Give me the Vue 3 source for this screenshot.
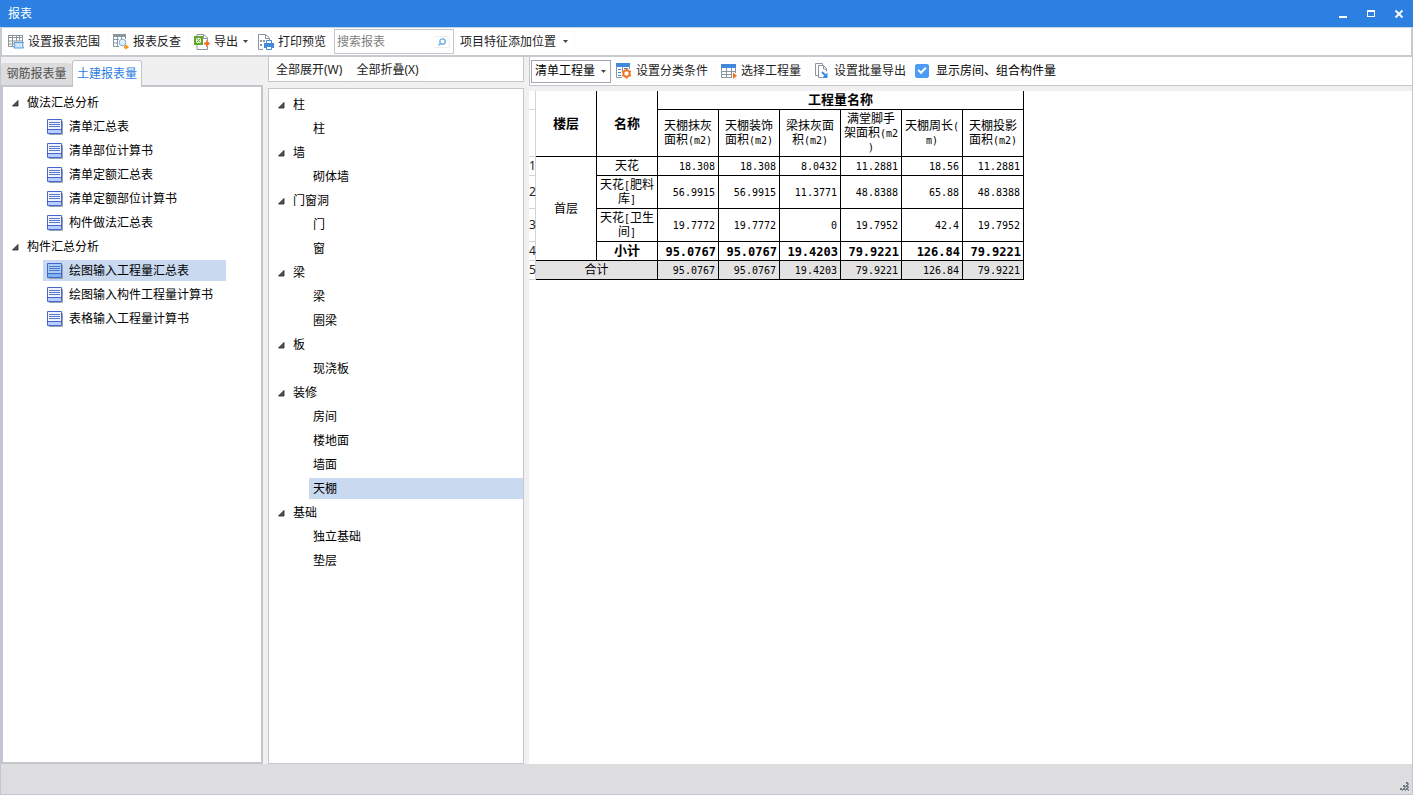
<script setup>
import { ref } from 'vue'

const keyword = ref('')
const scope = ref('清单工程量')
const showRooms = ref(true)
const selectedReport = ref('绘图输入工程量汇总表')
const selectedPart = ref('装修/天棚')

const reportTree = [
  { name: '做法汇总分析', children: ['清单汇总表', '清单部位计算书', '清单定额汇总表', '清单定额部位计算书', '构件做法汇总表'] },
  { name: '构件汇总分析', children: ['绘图输入工程量汇总表', '绘图输入构件工程量计算书', '表格输入工程量计算书'] }
]

const partTree = [
  { name: '柱', children: ['柱'] },
  { name: '墙', children: ['砌体墙'] },
  { name: '门窗洞', children: ['门', '窗'] },
  { name: '梁', children: ['梁', '圈梁'] },
  { name: '板', children: ['现浇板'] },
  { name: '装修', children: ['房间', '楼地面', '墙面', '天棚'] },
  { name: '基础', children: ['独立基础', '垫层'] }
]

// Each header is a list of lines; a line is [wide text, narrow text].
const headers = [
  [['天棚抹灰', ''], ['面积', '(m2)']],
  [['天棚装饰', ''], ['面积', '(m2)']],
  [['梁抹灰面', ''], ['积', '(m2)']],
  [['满堂脚手', ''], ['架面积', '(m2'], ['', ')']],
  [['天棚周长', '('], ['', 'm)']],
  [['天棚投影', ''], ['面积', '(m2)']]
]

const rows = [
  { name: [['天花', '']], values: ['18.308', '18.308', '8.0432', '11.2881', '18.56', '11.2881'] },
  { name: [['天花', '['], ['肥料', '']], tail: '库', values: ['56.9915', '56.9915', '11.3771', '48.8388', '65.88', '48.8388'] },
  { name: [['天花', '['], ['卫生', '']], tail: '间', values: ['19.7772', '19.7772', '0', '19.7952', '42.4', '19.7952'] }
]
const subtotal = ['95.0767', '95.0767', '19.4203', '79.9221', '126.84', '79.9221']
</script>

<template>
  <div class="window">
    <header class="titlebar">
      <h1>报表</h1>
      <div class="controls">
        <button type="button" aria-label="最小化"><svg width="10" height="10" viewBox="0 0 10 10"><path d="M1 7h8v2H1z" fill="#fff" /></svg></button>
        <button type="button" aria-label="最大化"><svg width="10" height="10" viewBox="0 0 10 10"><path d="M1 1h8v7H1zM2 3v4h6V3z" fill="#fff" fill-rule="evenodd" /></svg></button>
        <button type="button" aria-label="关闭"><svg width="10" height="10" viewBox="0 0 10 10"><path d="M1.500 1.500l7 7M8.500 1.500l-7 7" stroke="#fff" stroke-width="1.800" /></svg></button>
      </div>
    </header>

    <div class="toolbar">
      <button type="button" class="tool">
        <svg width="16" height="16" viewBox="0 0 16 16">
          <path d="M0 1h15v3H0z" fill="#8a969e" />
          <path d="M.5 3v9.500H6M.5 7h14M.5 10H6M4.500 4v8M8.500 4v3M11.500 4v3M14.500 3v5" fill="none" stroke="#8a969e" />
          <path d="M1 2h3v1H1zM5 2h3v1H5zM9 2h2v1H9zM12 2h2v1h-2z" fill="#fff" />
          <path d="M6 8.500h9.500l-1 2.500 1 3H6l1-3z" fill="#cfe5fa" stroke="#5b9de0" />
        </svg>
        <span>设置报表范围</span>
      </button>
      <button type="button" class="tool">
        <svg width="16" height="16" viewBox="0 0 16 16">
          <path d="M0 0h13v3H0z" fill="#8a969e" />
          <path d="M.5 0v12.500H6M.5 5.500H6M.5 9H5M4.500 3v9M8.500 3v2M12.500 2v3" fill="none" stroke="#8a969e" />
          <circle cx="9.500" cy="8.500" r="3.300" fill="#e2effc" stroke="#7fa8d8" />
          <path d="M13 10.500l3 2.500-3 2.500-2.500-2.500z" fill="#f39a1d" />
        </svg>
        <span>报表反查</span>
      </button>
      <button type="button" class="tool tight">
        <svg width="16" height="16" viewBox="0 0 16 16">
          <path d="M3 2V.5h7L13.500 4v3M13.500 12v3.500H3V11M9.500.5V4.500h4" fill="#fff" stroke="#8a969e" />
          <path d="M0 2h9v9H0z" fill="#65a52c" />
          <path d="M2 4h5v5H2z" fill="#e5f2d8" />
          <path d="M2.500 4.500l4 4M6.500 4.500l-4 4" stroke="#65a52c" />
          <path d="M10 8.500h2V6l4 3.500-4 3.500v-2.500h-2z" fill="#f26c21" />
        </svg>
        <span>导出</span>
        <svg class="caret" width="5" height="3" viewBox="0 0 5 3"><path d="M0 0h5L2.500 3z" fill="#444" /></svg>
      </button>
      <button type="button" class="tool">
        <svg width="16" height="16" viewBox="0 0 16 16">
          <path d="M5 15.500H.5V.5h7L11.500 4v2M7.500.5v4h4" fill="none" stroke="#8a969e" />
          <path d="M2 6h2v2H2zM5 6h2v2H5zM2 10h2v2H2z" fill="#8a969e" />
          <path d="M6 9h10v5H6z" fill="#4089dc" />
          <path d="M8.500 6.500h5v3h-5zM8.500 12.500h5v3h-5z" fill="#fff" stroke="#4089dc" />
        </svg>
        <span>打印预览</span>
      </button>
      <div class="search">
        <input v-model="keyword" type="text" placeholder="搜索报表" aria-label="搜索报表" />
        <button type="button" aria-label="搜索">
          <svg width="8" height="8" viewBox="0 0 8 8"><circle cx="4.500" cy="3.500" r="2.700" fill="none" stroke="#6aa9e4" stroke-width="1.300" /><path d="M2.600 5.400L.5 7.500" stroke="#6aa9e4" stroke-width="1.300" /></svg>
        </button>
      </div>
      <button type="button" class="tool wide">
        <span>项目特征添加位置</span>
        <svg class="caret" width="5" height="3" viewBox="0 0 5 3"><path d="M0 0h5L2.500 3z" fill="#444" /></svg>
      </button>
    </div>

    <main class="body">
      <section class="reports">
        <div class="tabs" role="tablist">
          <button type="button" role="tab" class="tab" aria-selected="false">钢筋报表量</button>
          <button type="button" role="tab" class="tab active" aria-selected="true">土建报表量</button>
        </div>
        <div class="report-panel">
          <ul class="tree report-tree">
            <li v-for="group in reportTree" :key="group.name">
              <div class="branch">
                <svg width="7" height="7" viewBox="0 0 7 7"><path d="M6 .5V6H.5z" fill="#555" stroke="#222" stroke-width=".8" /></svg>
                <span>{{ group.name }}</span>
              </div>
              <ul>
                <li v-for="item in group.children" :key="item" class="item">
                  <button type="button" class="leaf" :class="{ selected: item === selectedReport }" @click="selectedReport = item">
                    <svg width="16" height="16" viewBox="0 0 16 16">
                      <path d="M2 15.500h13.500V2" fill="none" stroke="#9aa3b5" />
                      <path class="sheet" d="M.5.5h14v14H.5z" stroke="#4468c8" />
                      <path class="foot" d="M1 11h13v3H1z" />
                      <path d="M1 10.500h13" stroke="#4468c8" />
                      <path d="M2 3.500h11M2 5.500h11M2 7.500h11" stroke="#5677cc" />
                    </svg>
                    <span>{{ item }}</span>
                  </button>
                </li>
              </ul>
            </li>
          </ul>
        </div>
      </section>

      <section class="parts">
        <div class="parts-bar">
          <button type="button" class="tool text">全部展开(W)</button>
          <button type="button" class="tool text">全部折叠(X)</button>
        </div>
        <div class="parts-panel">
          <ul class="tree">
            <li v-for="group in partTree" :key="group.name">
              <div class="branch">
                <svg width="7" height="7" viewBox="0 0 7 7"><path d="M6 .5V6H.5z" fill="#555" stroke="#222" stroke-width=".8" /></svg>
                <span>{{ group.name }}</span>
              </div>
              <ul>
                <li v-for="item in group.children" :key="item" class="item">
                  <button type="button" class="leaf" :class="{ selected: group.name + '/' + item === selectedPart }" @click="selectedPart = group.name + '/' + item">{{ item }}</button>
                </li>
              </ul>
            </li>
          </ul>
        </div>
      </section>

      <section class="view">
        <div class="view-bar">
          <div class="picker">
            <select v-model="scope" aria-label="工程量类型">
              <option>清单工程量</option>
              <option>定额工程量</option>
            </select>
            <svg width="5" height="3" viewBox="0 0 5 3"><path d="M0 0h5L2.500 3z" fill="#444" /></svg>
          </div>
          <button type="button" class="tool">
            <svg width="16" height="16" viewBox="0 0 16 16">
              <path d="M0 0h14v4H0z" fill="#4089dc" />
              <path d="M.5 3v11.500H6M13.500 3v3M6.500 4v4" fill="none" stroke="#8a969e" />
              <path d="M2 6.500h3M2 9.500h3M2 12.500h3M8 5.500h4" stroke="#4089dc" />
              <circle cx="10.500" cy="10.500" r="3.200" fill="#fff" stroke="#f07323" stroke-width="2" />
              <path d="M10.500 5.500v2M10.500 13.500v2M6.200 8l1.700 1M13.100 12l1.700 1M6.200 13l1.700-1M13.100 9l1.700-1" stroke="#f07323" stroke-width="2" />
            </svg>
            <span>设置分类条件</span>
          </button>
          <button type="button" class="tool">
            <svg width="16" height="16" viewBox="0 0 16 16">
              <path d="M0 1h15v4H0z" fill="#4089dc" />
              <path d="M.5 5v9.500H11M.5 8.500h14M.5 11.500H11M5.500 5v9M10.500 5v9M14.500 5v5" fill="none" stroke="#8a969e" />
              <path d="M12 9.500l4 3.250-4 3.250z" fill="#f07323" />
            </svg>
            <span>选择工程量</span>
          </button>
          <button type="button" class="tool">
            <svg width="16" height="16" viewBox="0 0 16 16">
              <path d="M4 12.500H1.500V.5h7v2M8 14.500H4.500v-12h5l3 3v3M9.500 2.500v3.500h3" fill="none" stroke="#8a969e" />
              <path d="M8 9l4 4" stroke="#4089dc" stroke-width="2" />
              <path d="M13.500 9.500v5.500H8z" fill="#4089dc" />
            </svg>
            <span>设置批量导出</span>
          </button>
          <label class="check">
            <input v-model="showRooms" type="checkbox" />
            <span>显示房间、组合构件量</span>
          </label>
        </div>

        <div class="sheet-area">
          <table>
            <thead>
              <tr class="r-title">
                <td class="no"></td>
                <th rowspan="2">楼层</th>
                <th rowspan="2">名称</th>
                <th colspan="6">工程量名称</th>
              </tr>
              <tr class="r-head">
                <td class="no"></td>
                <th v-for="(lines, i) in headers" :key="i" class="col">
                  <div v-for="(line, j) in lines" :key="j">{{ line[0] }}<span class="narrow">{{ line[1] }}</span></div>
                </th>
              </tr>
            </thead>
            <tbody>
              <tr v-for="(row, i) in rows" :key="i" :class="row.tail ? 'r-tall' : 'r-short'">
                <td class="no"><span>{{ i + 1 }}</span></td>
                <td v-if="i === 0" rowspan="4" class="name">首层</td>
                <td class="name">
                  <div><template v-for="(seg, j) in row.name" :key="j">{{ seg[0] }}<span class="narrow">{{ seg[1] }}</span></template></div>
                  <div v-if="row.tail">{{ row.tail }}<span class="narrow">]</span></div>
                </td>
                <td v-for="(v, j) in row.values" :key="j" class="num">{{ v }}</td>
              </tr>
              <tr class="r-short strong">
                <td class="no"><span>4</span></td>
                <td class="name">小计</td>
                <td v-for="(v, j) in subtotal" :key="j" class="num">{{ v }}</td>
              </tr>
            </tbody>
            <tfoot>
              <tr class="r-short total">
                <td class="no"><span>5</span></td>
                <td colspan="2" class="name">合计</td>
                <td v-for="(v, j) in subtotal" :key="j" class="num">{{ v }}</td>
              </tr>
            </tfoot>
          </table>
        </div>
      </section>
    </main>

    <footer class="status">
      <svg width="9" height="9" viewBox="0 0 9 9"><path d="M6 0h2v2H6zM3 3h2v2H3zM6 3h2v2H6zM0 6h2v2H0zM3 6h2v2H3zM6 6h2v2H6z" fill="#6f7780" /><path d="M8 1h1v2H8zM5 4h1v2H5zM8 4h1v2H8zM2 7h1v2H2zM5 7h1v2H5zM8 7h1v2H8zM7 2h1v1H7zM4 5h1v1H4zM7 5h1v1H7z" fill="#8b929a" /></svg>
    </footer>
  </div>
</template>

<style>
body {
  margin: 0;
}
</style>

<style scoped>
.window {
  display: flex;
  flex-direction: column;
  box-sizing: border-box;
  min-height: 100vh;
  border-bottom: 1px solid #c0c6d6;
  background: #f0f0f0;
  color: #000;
  font: 12px/16px "Noto Sans", "Noto Sans CJK SC", sans-serif;
}
button, input, select {
  box-sizing: border-box;
  margin: 0;
  padding: 0;
  border: 0;
  background: none;
  color: inherit;
  font: inherit;
}
svg { flex: none; display: block; }
ul { margin: 0; padding: 0; list-style: none; }

.titlebar {
  display: flex;
  align-items: center;
  justify-content: space-between;
  height: 27px;
  padding: 0 9px 0 8px;
  background: #2b80e2;
  color: #fff;
  border-bottom: 1px solid #c9d3e0;
}
.titlebar h1 { margin: 0; font-size: 12px; font-weight: 400; }
.controls { display: flex; gap: 18px; }

.toolbar {
  display: flex;
  align-items: center;
  gap: 1px;
  height: 27px;
  padding-left: 1px;
  background: #fff;
  border: solid #c6cad0;
  border-width: 0 2px 2px;
}
.tool {
  display: flex;
  align-items: center;
  gap: 4px;
  height: 22px;
  padding: 0 7px 0 5px;
  border-radius: 2px;
  box-shadow: inset 0 0 0 1px #fbfbfb;
  color: #222;
  white-space: nowrap;
}
.tool.tight { padding-right: 4px; }
.tool.tight .caret { margin-left: 1px; }
.tool.wide .caret { margin-left: 3px; }
.search {
  display: flex;
  align-items: center;
  box-sizing: border-box;
  width: 120px;
  height: 25px;
  padding: 0 3px 0 2px;
  border: 1px solid #c3c7cc;
  background: #fff;
}
.search input { flex: 1; min-width: 0; outline: 0; }
.search input::placeholder { color: #808080; opacity: 1; }
.search button {
  display: flex;
  align-items: center;
  justify-content: center;
  width: 16px;
  height: 12px;
  border: solid #eee;
  border-width: 1px 1px 1px 0;
}

.body {
  flex: 1;
  display: grid;
  grid-template-columns: 263px 256px 1fr;
  column-gap: 5px;
  border-right: 1px solid #c0c6d6;
}
.reports { display: flex; flex-direction: column; padding-top: 3px; border-left: 1px solid #c0c6d6; }
.tabs { display: flex; align-items: flex-end; height: 25px; }
.tab {
  height: 22px;
  width: 71px;
  border-radius: 3px 3px 0 0;
  background: #dcdcdc;
  color: #505050;
}
.tab.active {
  position: relative;
  height: 27px;
  width: 70px;
  margin-bottom: -2px;
  border: 1px solid #c0c4c9;
  border-bottom: 0;
  background: #fff;
  color: #2b80e2;
}
.report-panel { flex: 1; padding-top: 3px; border: 2px solid #c3c7cc; background: #fff; }
.branch { display: flex; align-items: center; gap: 8px; height: 22px; padding: 2px 0 0 9px; }
.item { padding: 2px 0 1px; }
.leaf {
  display: flex;
  align-items: center;
  gap: 6px;
  width: 100%;
  height: 21px;
  padding-left: 4px;
  text-align: left;
}
.leaf.selected { background: #c9d9f0; }
.report-tree { width: fit-content; }
.report-tree ul { padding-left: 40px; }
.report-tree .leaf { padding-right: 13px; }
.sheet { fill: #f2f5ff; }
.foot { fill: #b9ccff; }
.selected .sheet { fill: #a5cdf2; }
.selected .foot { fill: #7fb2f5; }

.parts { display: flex; flex-direction: column; }
.parts-bar {
  display: flex;
  align-items: center;
  box-sizing: border-box;
  gap: 2px;
  height: 25px;
  margin-bottom: 6px;
  padding: 2px 0 0 2px;
  border: 1px solid #c3c7cc;
  border-top: 0;
  background: #fff;
}
.parts-panel { flex: 1; padding-top: 3px; border: 1px solid #c3c7cc; background: #fff; }
.parts-panel ul ul { padding-left: 40px; }

.view { display: flex; flex-direction: column; min-width: 0; }
.view-bar {
  display: flex;
  align-items: center;
  box-sizing: border-box;
  height: 29px;
  margin-bottom: 5px;
  padding-left: 1px;
  border: solid #c3c7cc;
  border-width: 0 0 1px 1px;
  background: #fff;
}
.view-bar .tool + .tool { margin-left: 1px; }
.picker { position: relative; }
.picker select {
  appearance: none;
  display: block;
  width: 80px;
  height: 23px;
  padding-left: 3px;
  border: 1px solid #a3a7ab;
  background: #fff;
}
.picker svg { position: absolute; right: 5px; top: 10px; pointer-events: none; }
.check { display: flex; align-items: center; gap: 7px; margin-left: 2px; }
.check input {
  appearance: none;
  display: grid;
  place-items: center;
  width: 14px;
  height: 14px;
  border: 1px solid #4c9bf5;
  border-radius: 2px;
}
.check input:checked { background: #4c9bf5; }
.check input:checked::after {
  content: "";
  width: 8px;
  height: 5px;
  margin-bottom: 3px;
  border: solid #fff;
  border-width: 0 0 2px 2px;
  box-sizing: border-box;
  transform: rotate(-45deg);
}

.sheet-area { flex: 1; background: #fff; }
table { border-collapse: separate; border-spacing: 0; table-layout: fixed; font-family: "Liberation Sans", "Noto Sans CJK SC", sans-serif; }
th, td {
  box-sizing: border-box;
  width: 61px;
  padding: 0;
  border: solid #000;
  border-width: 0 1px 1px 0;
  line-height: 14px;
  text-align: center;
  vertical-align: middle;
  white-space: nowrap;
}
th { font-size: 13px; font-weight: 700; }
th.col { font-size: 12px; font-weight: 400; }
.narrow { font-family: "DejaVu Sans Mono", monospace; font-size: 10px; line-height: 0; }
.no {
  width: 7px;
  border-color: #d4d4d4;
  color: #222;
  font-family: "Noto Sans", sans-serif;
}
.no span { display: block; width: 6px; }
.num {
  padding: 2px 3px 0 0;
  text-align: right;
  font-family: "DejaVu Sans Mono", monospace;
  font-size: 10px;
}
.r-title { height: 19px; }
.r-head { height: 47px; }
.r-short { height: 19px; }
.r-tall { height: 33px; }
.strong .name { font-size: 13px; font-weight: 700; }
.strong .num { padding-right: 2px; font-size: 12px; font-weight: 700; }
.total td:not(.no) { background: #e3e3e3; }

.status {
  display: flex;
  align-items: flex-end;
  justify-content: flex-end;
  box-sizing: border-box;
  height: 30px;
  padding: 3px;
  background: #dddddf;
  border: solid #c0c6d6;
  border-width: 0 1px;
}
</style>
